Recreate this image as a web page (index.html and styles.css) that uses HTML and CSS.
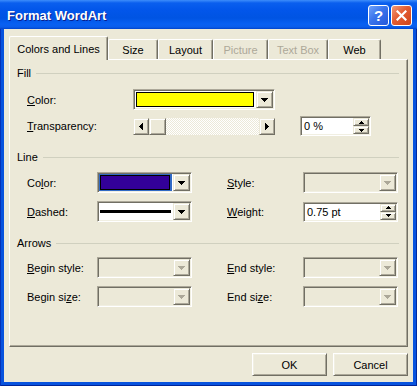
FILE: index.html
```html
<!DOCTYPE html>
<html>
<head>
<meta charset="utf-8">
<title>Format WordArt</title>
<link rel="stylesheet" href="styles.css">
</head>
<body>
<div class="window">
  <div class="titlebar">
    <span class="title">Format WordArt</span>
    <div class="tb-buttons">
      <span class="tb-btn help">?</span>
      <span class="tb-btn close"><svg width="11" height="11" viewBox="0 0 11 11"><path d="M1.5 1.5L9.5 9.5M9.5 1.5L1.5 9.5" stroke="#fff" stroke-width="2.2" stroke-linecap="square"/></svg></span>
    </div>
  </div>
  <div class="frame">
    <div class="client">
      <div class="tabs">
        <div class="tab sel w-cl">Colors and Lines</div>
        <div class="tab w-size">Size</div>
        <div class="tab w-layout">Layout</div>
        <div class="tab dis w-pic">Picture</div>
        <div class="tab dis w-tb">Text Box</div>
        <div class="tab w-web">Web</div>
      </div>
      <div class="panel">
        <div class="gh first"><span>Fill</span><i class="rule"></i></div>
        <div class="row r-fill">
          <span class="lbl l-fill"><u>C</u>olor:</span>
          <div class="combo c-wide">
            <div class="field"><span class="swatch yellow"></span></div>
            <span class="drop"><svg width="7" height="4"><path d="M0 0h7v1H0zM1 1h5v1H1zM2 2h3v1H2zM3 3h1v1H3z"/></svg></span>
          </div>
        </div>
        <div class="row r-trans">
          <span class="lbl l-fill"><u>T</u>ransparency:</span>
          <div class="scroll">
            <span class="sbtn"><svg width="4" height="7"><path d="M3 0h1v7H3zM2 1h1v5H2zM1 2h1v3H1zM0 3h1v1H0z"/></svg></span>
            <span class="thumb"></span>
            <span class="track"></span>
            <span class="sbtn"><svg width="4" height="7"><path d="M0 0h1v7H0zM1 1h1v5H1zM2 2h1v3H2zM3 3h1v1H3z"/></svg></span>
          </div>
          <div class="spin s-pct">
            <span class="val">0 %</span>
            <span class="sbtns">
              <span class="sb"><svg width="5" height="3"><path d="M2 0h1v1H2zM1 1h3v1H1zM0 2h5v1H0z"/></svg></span>
              <span class="sb"><svg width="5" height="3"><path d="M0 0h5v1H0zM1 1h3v1H1zM2 2h1v1H2z"/></svg></span>
            </span>
          </div>
        </div>

        <div class="gh sec"><span>Line</span><i class="rule"></i></div>
        <div class="row r-l1">
          <span class="lbl l-a">Co<u>l</u>or:</span>
          <div class="combo c-sm">
            <div class="field focus"><span class="swatch indigo"></span></div>
            <span class="drop"><svg width="7" height="4"><path d="M0 0h7v1H0zM1 1h5v1H1zM2 2h3v1H2zM3 3h1v1H3z"/></svg></span>
          </div>
          <span class="lbl l-b"><u>S</u>tyle:</span>
          <div class="combo c-sm disabled">
            <div class="field"></div>
            <span class="drop"><svg width="7" height="4"><path d="M0 0h7v1H0zM1 1h5v1H1zM2 2h3v1H2zM3 3h1v1H3z"/></svg></span>
          </div>
        </div>
        <div class="row r-l2">
          <span class="lbl l-a"><u>D</u>ashed:</span>
          <div class="combo c-sm">
            <div class="field dash"><span class="dashline"></span></div>
            <span class="drop"><svg width="7" height="4"><path d="M0 0h7v1H0zM1 1h5v1H1zM2 2h3v1H2zM3 3h1v1H3z"/></svg></span>
          </div>
          <span class="lbl l-b"><u>W</u>eight:</span>
          <div class="spin s-wt">
            <span class="val">0.75 pt</span>
            <span class="sbtns">
              <span class="sb"><svg width="5" height="3"><path d="M2 0h1v1H2zM1 1h3v1H1zM0 2h5v1H0z"/></svg></span>
              <span class="sb"><svg width="5" height="3"><path d="M0 0h5v1H0zM1 1h3v1H1zM2 2h1v1H2z"/></svg></span>
            </span>
          </div>
        </div>

        <div class="gh sec"><span>Arrows</span><i class="rule"></i></div>
        <div class="row r-a1">
          <span class="lbl l-a"><u>B</u>egin style:</span>
          <div class="combo c-sm disabled">
            <div class="field"></div>
            <span class="drop"><svg width="7" height="4"><path d="M0 0h7v1H0zM1 1h5v1H1zM2 2h3v1H2zM3 3h1v1H3z"/></svg></span>
          </div>
          <span class="lbl l-b"><u>E</u>nd style:</span>
          <div class="combo c-sm disabled">
            <div class="field"></div>
            <span class="drop"><svg width="7" height="4"><path d="M0 0h7v1H0zM1 1h5v1H1zM2 2h3v1H2zM3 3h1v1H3z"/></svg></span>
          </div>
        </div>
        <div class="row r-a2">
          <span class="lbl l-a">Begin si<u>z</u>e:</span>
          <div class="combo c-sm disabled">
            <div class="field"></div>
            <span class="drop"><svg width="7" height="4"><path d="M0 0h7v1H0zM1 1h5v1H1zM2 2h3v1H2zM3 3h1v1H3z"/></svg></span>
          </div>
          <span class="lbl l-b">End si<u>z</u>e:</span>
          <div class="combo c-sm disabled">
            <div class="field"></div>
            <span class="drop"><svg width="7" height="4"><path d="M0 0h7v1H0zM1 1h5v1H1zM2 2h3v1H2zM3 3h1v1H3z"/></svg></span>
          </div>
        </div>
      </div>
      <div class="actions">
        <span class="btn">OK</span>
        <span class="btn">Cancel</span>
      </div>
    </div>
  </div>
</div>
</body>
</html>
```
FILE: styles.css
```css
* { box-sizing: border-box; }
html, body { margin: 0; padding: 0; }
body {
  width: 417px;
  height: 386px;
  overflow: hidden;
  background: #0054E3;
  font-family: "Liberation Sans", Arial, sans-serif;
  font-size: 11px;
  color: #000;
}
.window {
  width: 417px;
  height: 386px;
  display: flex;
  flex-direction: column;
}

/* Title bar */
.titlebar {
  height: 29px;
  flex: none;
  display: flex;
  align-items: center;
  justify-content: space-between;
  padding: 1px 5px 0 7px;
  background: linear-gradient(to bottom, #3D8DFB 0px, #0A5FEE 3px, #0256EA 10px, #0054E3 18px, #0860F2 24px, #0A5DEB 27px, #0043CC 29px);
}
.title {
  color: #fff;
  font-weight: bold;
  font-size: 13px;
  text-shadow: 1px 1px #0A1F8C;
}
.tb-buttons { display: flex; gap: 2px; }
.tb-btn {
  width: 21px;
  height: 21px;
  border: 1px solid #fff;
  border-radius: 3px;
  display: flex;
  align-items: center;
  justify-content: center;
  color: #fff;
}
.help {
  background: linear-gradient(135deg, #6FA2FA 0%, #3A74EC 45%, #2458DA 100%);
  font-weight: bold;
  font-size: 15px;
  font-family: "Liberation Sans", Arial, sans-serif;
}
.close {
  background: linear-gradient(135deg, #F29A78 0%, #E35C32 45%, #CF4419 100%);
}

/* Frame / client */
.frame {
  flex: 1;
  display: flex;
  padding: 0 4px 4px 4px;
  background: #0853DE;
  box-shadow: inset 1px 0 #0633B8, inset -1px 0 #0029A0, inset 0 -1px #00259A;
}
.client {
  flex: 1;
  background: #ECE9D8;
  display: flex;
  flex-direction: column;
}

/* Tabs */
.tabs {
  display: flex;
  align-items: flex-end;
  height: 30px;
  padding-left: 5px;
  position: relative;
  z-index: 1;
}
.tab {
  height: 20px;
  border: 1px solid;
  border-color: #fff #716F64 transparent #fff;
  border-bottom: 0;
  border-radius: 2px 2px 0 0;
  box-shadow: inset -1px 0 #ACA899;
  display: flex;
  align-items: center;
  justify-content: center;
  background: #ECE9D8;
  padding-top: 1px;
}
.tab.sel {
  height: 24px;
  margin-bottom: -1px;
  padding-top: 0;
}
.tab.dis { color: #ACA899; }
.w-cl { width: 99px; }
.w-size { width: 50px; }
.w-layout { width: 55px; }
.w-pic { width: 55px; }
.w-tb { width: 60px; }
.w-web { width: 53px; }

/* Panel */
.panel {
  margin: 0 5px;
  height: 288px;
  border: 1px solid;
  border-color: #fff #716F64 #716F64 #fff;
  box-shadow: inset -1px -1px #ACA899;
  padding: 6px 8px 0 7px;
  display: flex;
  flex-direction: column;
}
.gh {
  display: flex;
  align-items: center;
  height: 14px;
}
.gh.sec { margin-top: 14px; }
.gh .rule {
  flex: 1;
  height: 1px;
  background: #D0D0BF;
  margin-left: 5px;
}
.row {
  display: flex;
  align-items: center;
  padding-left: 10px;
}
.r-fill { margin-top: 9px; height: 21px; }
.r-trans { margin-top: 6px; height: 20px; }
.r-l1 { margin-top: 8px; height: 21px; }
.r-l2 { margin-top: 8px; height: 21px; }
.r-a1 { margin-top: 7px; height: 21px; }
.r-a2 { margin-top: 8px; height: 21px; }

.lbl { flex: none; }
.l-fill { width: 106px; }
.l-a { width: 70px; }
.l-b { width: 76px; margin-left: 35px; }

/* Combo boxes */
.combo {
  display: flex;
  height: 21px;
  border: 1px solid;
  border-color: #ACA899 #fff #fff #ACA899;
  box-shadow: inset 1px 1px #716F64, inset -1px -1px #F1EFE2;
  padding: 1px;
  background: #fff;
  flex: none;
}
.c-wide { width: 142px; }
.c-sm { width: 95px; }
.field {
  flex: 1;
  display: flex;
  padding: 1px;
}
.field.focus { background: #316AC5; padding: 1px 2px 1px 1px; }
.swatch {
  flex: 1;
  border: 1px solid #000;
}
.yellow { background: #FFFF00; }
.indigo { background: #330099; }
.field.dash { align-items: center; padding: 0 1px 0 1px; }
.dashline { flex: 1; height: 3px; background: #000; }
.combo.disabled { background: #ECE9D8; }
.combo.disabled .drop svg { fill: #ACA899; }

.drop {
  width: 17px;
  flex: none;
  background: #ECE9D8;
  border: 1px solid;
  border-color: #ECE9D8 #716F64 #716F64 #ECE9D8;
  box-shadow: inset 1px 1px #fff, inset -1px -1px #ACA899;
  display: flex;
  align-items: center;
  justify-content: center;
  margin-left: 1px;
}
.drop svg { fill: #000; display: block; }

/* Scroll bar */
.scroll {
  display: flex;
  width: 142px;
  height: 17px;
  flex: none;
}
.sbtn, .thumb {
  width: 16px;
  flex: none;
  background: #ECE9D8;
  border: 1px solid;
  border-color: #ECE9D8 #716F64 #716F64 #ECE9D8;
  box-shadow: inset 1px 1px #fff, inset -1px -1px #ACA899;
  display: flex;
  align-items: center;
  justify-content: center;
}
.sbtn svg { display: block; fill: #000; }
.thumb { width: 17px; }
.track {
  flex: 1;
  background: repeating-conic-gradient(#fff 0 25%, #ECE9D8 0 50%) 0 0 / 2px 2px;
}

/* Spinners */
.spin {
  display: flex;
  height: 20px;
  flex: none;
  border: 1px solid;
  border-color: #ACA899 #fff #fff #ACA899;
  box-shadow: inset 1px 1px #716F64, inset -1px -1px #F1EFE2;
  padding: 1px;
  background: #fff;
}
.s-pct { width: 71px; margin-left: 25px; }
.s-wt { width: 95px; }
.spin .val {
  flex: 1;
  display: flex;
  align-items: center;
  padding-left: 2px;
}
.sbtns {
  width: 16px;
  flex: none;
  display: flex;
  flex-direction: column;
}
.sb {
  flex: 1;
  background: #ECE9D8;
  border: 1px solid;
  border-color: #ECE9D8 #716F64 #716F64 #ECE9D8;
  box-shadow: inset 1px 1px #fff, inset -1px -1px #ACA899;
  display: flex;
  align-items: center;
  justify-content: center;
}
.sb svg { display: block; fill: #000; }

/* Buttons */
.actions {
  display: flex;
  justify-content: flex-end;
  gap: 6px;
  padding: 6px 5px 0 0;
}
.btn {
  width: 75px;
  height: 23px;
  border: 1px solid;
  border-color: #fff #716F64 #716F64 #fff;
  box-shadow: inset 1px 1px #F1EFE2, inset -1px -1px #ACA899;
  background: #ECE9D8;
  display: flex;
  align-items: center;
  justify-content: center;
}
```
